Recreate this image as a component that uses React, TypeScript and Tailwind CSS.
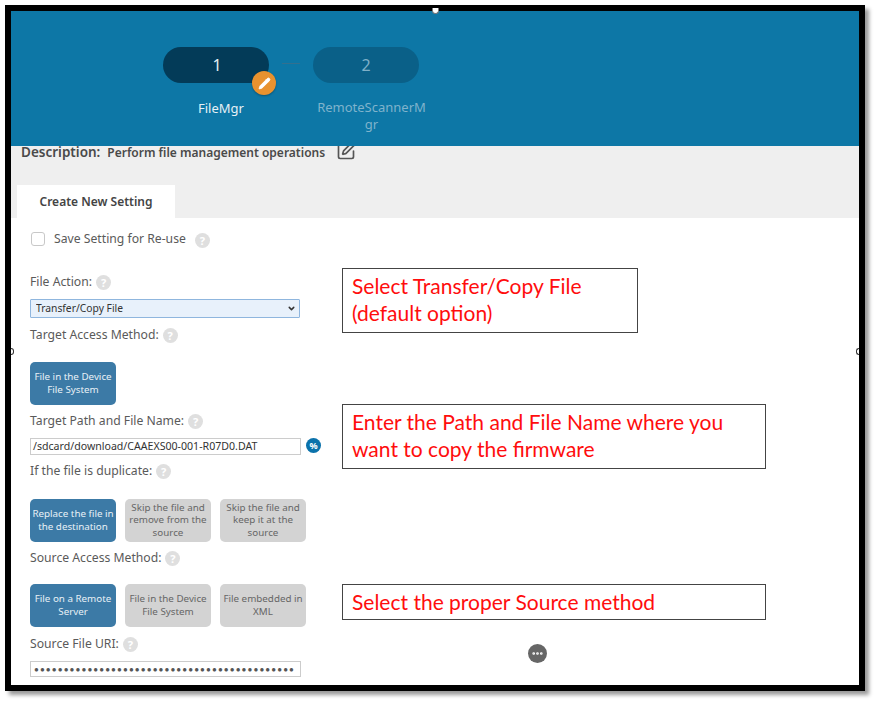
import { ChevronDown, Pencil, SquarePen, Ellipsis } from "lucide-react";

function Help() {
  return (
    <span className="ml-[4px] inline-flex h-[15px] w-[15px] items-center justify-center rounded-full bg-[#dfdfdf] text-[11px] font-bold leading-none text-white">
      ?
    </span>
  );
}

function Label({ text, className }: { text: string; className: string }) {
  return (
    <div className={`flex h-[18px] items-center text-[12.2px] text-[#5a5a5a] ${className}`}>
      {text}
      <Help />
    </div>
  );
}

function Choice({ text, active }: { text: string; active?: boolean }) {
  return (
    <div
      className={`flex h-[43px] w-[86px] items-center justify-center rounded-[5px] text-center text-[9.8px] leading-[12.5px] ${
        active ? "bg-[#3c7aa6] text-[#e8f1f6]" : "bg-[#d3d3d3] text-[#666666]"
      }`}
    >
      {text}
    </div>
  );
}

function Callout({ className, children }: { className: string; children: React.ReactNode }) {
  return (
    <div
      className={`absolute border border-[#444444] bg-white pl-[9px] font-['Lato',sans-serif] text-[21px] leading-[27px] text-[#ff0d0d] ${className}`}
    >
      {children}
    </div>
  );
}

export default function App() {
  return (
    <div className="h-[704px] w-[878px] bg-white pl-[5px] pt-[5px] font-['Noto_Sans',sans-serif]">
      <div className="relative h-[686px] w-[860px] border-[6px] border-black bg-white shadow-[4px_4px_4px_rgba(0,0,0,0.4)]">
        <header className="relative z-10 flex h-[135px] bg-[#0d77a6] pl-[152px] pt-[36px]">
          <div className="flex w-[106px] flex-col items-center">
            <div className="relative flex h-[36px] w-[106px] items-center justify-center rounded-[18px] bg-[#033b58] pl-[2px] text-[16px] text-[#e4eef3]">
              1
              <span className="absolute left-[89px] top-[24px] flex h-[24px] w-[24px] items-center justify-center rounded-full bg-[#e8922f] shadow-[0_1px_2px_rgba(0,0,0,0.3)]">
                <Pencil size={13} fill="white" strokeWidth={1.5} className="text-white" />
              </span>
            </div>
            <div className="ml-[10px] mt-[16px] text-[13px] leading-[18px] text-[#e6f1f6]">FileMgr</div>
          </div>
          <div className="mx-[13px] mt-[16px] h-[1px] w-[18px] bg-[#33708f]" />
          <div className="flex w-[106px] flex-col items-center">
            <div className="flex h-[36px] w-[106px] items-center justify-center rounded-[18px] bg-[#0a6088] text-[16px] text-[#7fb0c8]">
              2
            </div>
            <div className="ml-[11px] mt-[16px] whitespace-nowrap text-center text-[13px] leading-[17px] text-[#7fb3cc]">
              RemoteScannerM
              <br />
              gr
            </div>
          </div>
        </header>

        <div className="h-[72px] bg-[#efefef] pl-[6px]">
          <div className="flex h-[13px] items-center pl-[4px]">
            <span className="text-[13.5px] font-semibold text-[#4a4a4a]">Description:</span>
            <span className="ml-[7px] text-[12px] font-semibold text-[#4a4a4a]">
              Perform file management operations
            </span>
            <SquarePen size={20} strokeWidth={2} className="ml-[11px] -mt-[3px] text-[#555555]" />
          </div>
          <div className="mt-[26px] flex h-[33px] w-[158px] items-center justify-center bg-white text-[12px] font-semibold text-[#444444]">
            Create New Setting
          </div>
        </div>

        <main className="pl-[19px]">
          <div className="mt-[14px] flex h-[14px] items-center">
            <span className="ml-[1px] h-[14px] w-[14px] rounded-[3px] border border-[#c8c8c8] bg-white" />
            <span className="ml-[9px] text-[12.2px] text-[#5a5a5a]">Save Setting for Re-use</span>
            <span className="ml-[5px]">
              <Help />
            </span>
          </div>

          <Label text="File Action:" className="mt-[27px]" />
          <div className="relative mt-[8px] h-[19px] w-[270px]">
            <select
              defaultValue="copy"
              className="block h-[19px] w-[270px] appearance-none rounded-[1px] border border-[#8fb6de] bg-[#e8f1fb] pl-[5px] text-[10.3px] text-[#333333]"
            >
              <option value="copy">Transfer/Copy File</option>
            </select>
            <ChevronDown size={9} strokeWidth={4} className="absolute right-[4px] top-[5px] text-[#333333]" />
          </div>

          <Label text="Target Access Method:" className="mt-[8px]" />
          <div className="mt-[18px]">
            <Choice text="File in the Device File System" active />
          </div>

          <Label text="Target Path and File Name:" className="mt-[7px]" />
          <div className="mt-[8px] flex items-center">
            <div className="flex h-[17px] w-[271px] items-center border border-[#cccccc] pl-[2px] text-[10.6px] text-[#333333]">
              /sdcard/download/CAAEXS00-001-R07D0.DAT
            </div>
            <span className="-mt-[2px] ml-[5px] flex h-[15px] w-[15px] items-center justify-center rounded-full bg-[#0b72ab] text-[9px] font-bold text-white">
              %
            </span>
          </div>

          <Label text="If the file is duplicate:" className="mt-[7px]" />
          <div className="mt-[19px] flex gap-[9px]">
            <Choice text="Replace the file in the destination" active />
            <Choice text="Skip the file and remove from the source" />
            <Choice text="Skip the file and keep it at the source" />
          </div>

          <Label text="Source Access Method:" className="mt-[7px]" />
          <div className="mt-[17px] flex gap-[9px]">
            <Choice text="File on a Remote Server" active />
            <Choice text="File in the Device File System" />
            <Choice text="File embedded in XML" />
          </div>

          <Label text="Source File URI:" className="mt-[8px]" />
          <div className="mt-[8px] flex h-[16px] w-[271px] items-center overflow-hidden border border-[#cccccc] pl-[3px] text-[8px] tracking-[1.1px] text-[#555555]">
            ●●●●●●●●●●●●●●●●●●●●●●●●●●●●●●●●●●●●●●●●●●●●
          </div>
        </main>

        <Callout className="left-[331px] top-[257px] h-[65px] w-[296px] pt-[3px]">
          Select Transfer/Copy File
          <br />
          (default option)
        </Callout>
        <Callout className="left-[331px] top-[393px] h-[65px] w-[424px] pt-[3px]">
          Enter the Path and File Name where you
          <br />
          want to copy the firmware
        </Callout>
        <Callout className="left-[331px] top-[573px] h-[36px] w-[424px] pt-[3px]">
          Select the proper Source method
        </Callout>

        <span className="absolute left-[517px] top-[633px] flex h-[19px] w-[19px] items-center justify-center rounded-full bg-[#666666]">
          <Ellipsis size={13} strokeWidth={3} className="text-white" />
        </span>
        <span className="absolute left-[421px] top-[-3px] z-20 h-[6px] w-[7px] rounded-b-full border border-t-0 border-[#777777] bg-white" />
        <span className="absolute left-0 top-[337px] h-[7px] w-[3px] rounded-r-full border border-l-0 border-[#333333] bg-white" />
        <span className="absolute right-0 top-[337px] h-[7px] w-[3px] rounded-l-full border border-r-0 border-[#333333] bg-white" />
      </div>
    </div>
  );
}
